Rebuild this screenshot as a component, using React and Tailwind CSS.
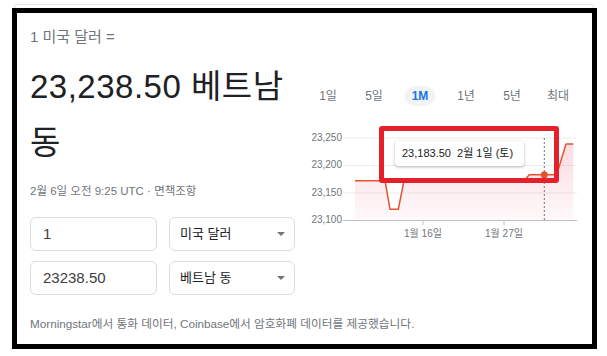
import React from "react";

const Arrow = () => (
  <svg width="8" height="4" viewBox="0 0 8 4" className="shrink-0">
    <path d="M0 0 L8 0 L4 4 Z" fill="#757575" />
  </svg>
);

function Chart() {
  const line =
    "M50 60.7 L80 60.7 L85 89.3 L93.3 89.3 L99 60.7 L219 60.7 L224.3 54.7 L251.7 54.7 L261 24 L268.3 24";
  const fill = line + " L268.3 100.5 L50 100.5 Z";
  const labels = [
    ["23,250", 18],
    ["23,200", 45.5],
    ["23,150", 73],
    ["23,100", 100.5],
  ];
  return (
    <svg width="278" height="125" viewBox="0 0 278 125" className="block">
      <defs>
        <linearGradient id="g" x1="0" y1="24" x2="0" y2="100" gradientUnits="userSpaceOnUse">
          <stop offset="0" stopColor="#f06a82" stopOpacity="0.24" />
          <stop offset="1" stopColor="#f06a82" stopOpacity="0.04" />
        </linearGradient>
      </defs>
      {labels.map(([t, y], i) => (
        <g key={t}>
          <line x1="38" x2="272" y1={y} y2={y} stroke={i === 3 ? "#bdc1c6" : "#ececec"} strokeWidth="1" />
          <text
            x="37"
            y={y}
            textAnchor="end"
            dominantBaseline="middle"
            fontSize="10"
            fill="#70757a"
            fontFamily="Liberation Sans, sans-serif"
          >
            {t}
          </text>
        </g>
      ))}
      <path d={fill} fill="url(#g)" />
      <path d={line} fill="none" stroke="#e5532c" strokeWidth="1.5" strokeLinejoin="round" />
      <line x1="239.3" x2="239.3" y1="18" y2="100.5" stroke="#70757a" strokeWidth="1" strokeDasharray="2 2" />
      <circle cx="239.3" cy="54.7" r="3.5" fill="#e5532c" />
      <line x1="118" x2="118" y1="100.5" y2="105" stroke="#bdc1c6" />
      <line x1="199" x2="199" y1="100.5" y2="105" stroke="#bdc1c6" />
      <text x="118" y="114" textAnchor="middle" dominantBaseline="middle" fontSize="10" fill="#70757a" fontFamily="Liberation Sans, Noto Sans CJK KR, sans-serif">
        1월 16일
      </text>
      <text x="199" y="114" textAnchor="middle" dominantBaseline="middle" fontSize="10" fill="#70757a" fontFamily="Liberation Sans, Noto Sans CJK KR, sans-serif">
        1월 27일
      </text>
    </svg>
  );
}

export default function App() {
  const tabs = ["1일", "5일", "1M", "1년", "5년", "최대"];
  return (
    <div className="w-[607px] h-[356px] bg-white overflow-hidden font-['Liberation_Sans','Noto_Sans_CJK_KR',sans-serif]">
      <div className="pt-[4px]">
        <div className="ml-[14px] w-[580px] h-[4px] border-t border-x border-[#e3e3e3] rounded-t-[6px]" />
        <div className="ml-[12px] w-[585px] h-[341px] border-[5px] border-black bg-white">
          <div className="pl-[13px] pt-[14px] flex flex-col">
            <div className="flex items-start">
              {/* left column */}
              <div className="w-[265px] flex flex-col">
                <div className="text-[15px] leading-[20px] text-[#70757a]">1 미국 달러 =</div>
                <div className="mt-[11.5px] text-[33px] leading-[56px] text-[#202124] tracking-[0.5px]">
                  23,238.50 베트남 동
                </div>
                <div className="mt-[12.5px] text-[11.5px] leading-[16px] text-[#70757a]">2월 6일 오전 9:25 UTC · 면책조항</div>
                <div className="mt-[18px] flex flex-col gap-[10px]">
                  <div className="flex gap-[12px]">
                    <div className="w-[127px] h-[34px] border border-[#dadce0] rounded-[6px] flex items-center pl-[12px] text-[15px] text-[#3c4043]">1</div>
                    <div className="w-[126px] h-[34px] border border-[#dadce0] rounded-[6px] flex items-center justify-between pl-[10px] pr-[9px] text-[13px] text-[#202124]">
                      <span>미국 달러</span>
                      <Arrow />
                    </div>
                  </div>
                  <div className="flex gap-[12px]">
                    <div className="w-[127px] h-[34px] border border-[#dadce0] rounded-[6px] flex items-center pl-[12px] text-[15px] text-[#3c4043]">23238.50</div>
                    <div className="w-[126px] h-[34px] border border-[#dadce0] rounded-[6px] flex items-center justify-between pl-[10px] pr-[9px] text-[13px] text-[#202124]">
                      <span>베트남 동</span>
                      <Arrow />
                    </div>
                  </div>
                </div>
              </div>
              {/* right column */}
              <div className="ml-[10px] w-[278px] mt-[59px] flex flex-col">
                <div className="flex h-[20px]">
                  {tabs.map((t) => (
                    <div key={t} className="w-[46px] flex items-center justify-center text-[12px]">
                      {t === "1M" ? (
                        <span className="w-[30px] h-[20px] rounded-full bg-[#f1f3f4] text-[#1a73e8] font-bold flex items-center justify-center">1M</span>
                      ) : (
                        <span className="text-[#70757a]">{t}</span>
                      )}
                    </div>
                  ))}
                </div>
                <div className="relative mt-[14px] h-[125px]">
                  <Chart />
                  <div className="absolute left-[90px] top-[21px] w-[129px] h-[25px] bg-white rounded-[3px] shadow-[0_1px_3px_rgba(0,0,0,0.3)] flex items-center pl-[7px] text-[11px] text-[#202124] whitespace-pre">
                    23,183.50  2월 1일 (토)
                  </div>
                  <div className="absolute left-[74px] top-[6px] w-[180px] h-[57px] border-[5px] border-[#e3202b] rounded-[3px]" />
                </div>
              </div>
            </div>
            <div className="mt-[21px] text-[11.7px] leading-[16px] text-[#70757a] whitespace-nowrap">
              Morningstar에서 통화 데이터, Coinbase에서 암호화폐 데이터를 제공했습니다.
            </div>
          </div>
        </div>
      </div>
    </div>
  );
}
